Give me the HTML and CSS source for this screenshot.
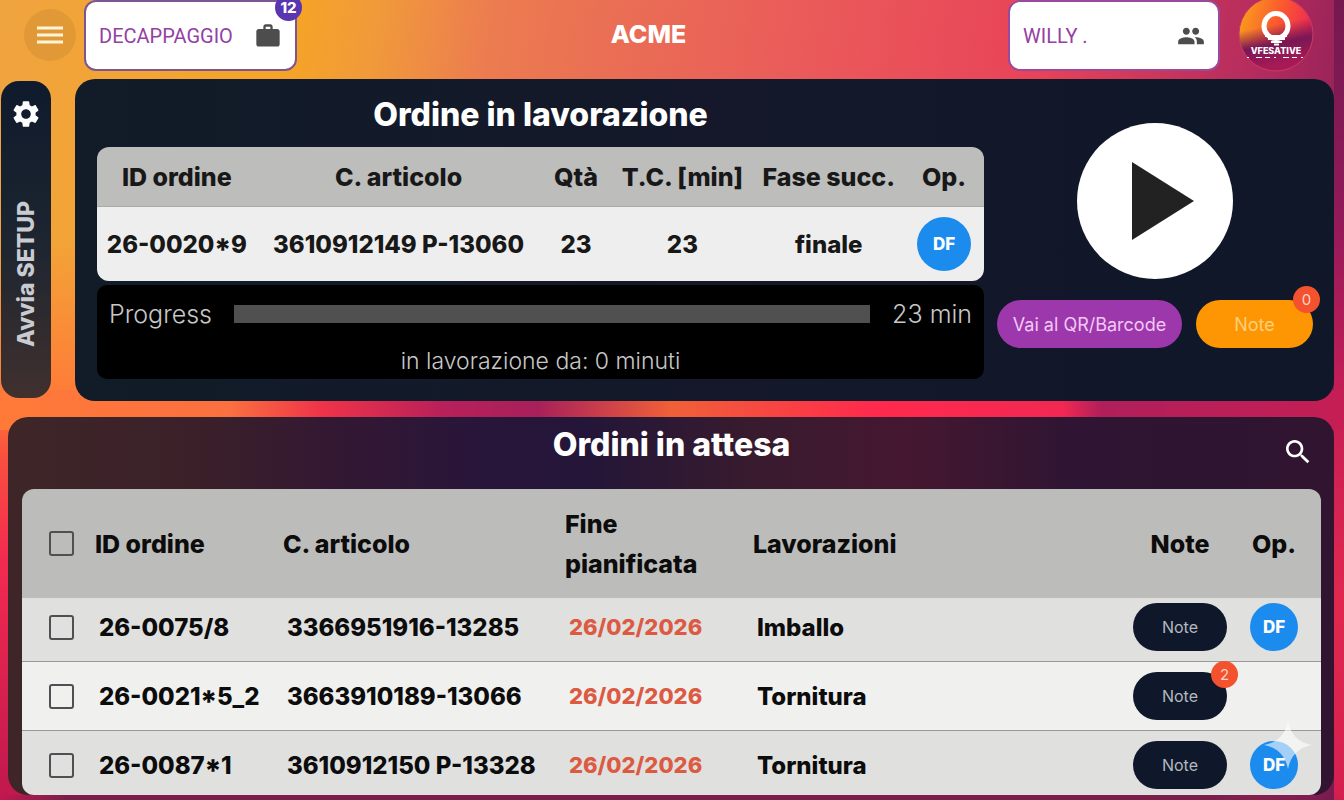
FILE: index.html
```html
<!DOCTYPE html>
<html lang="it">
<head>
  <meta charset="UTF-8">
  <meta name="viewport" content="width=device-width, initial-scale=1.0">
  <title>Ordini</title>
  <link rel="stylesheet" href="styles.css">
</head>
<body>
  <header class="topbar">
    <button class="menu-btn" aria-label="Menu">
      <svg viewBox="0 0 26 20" width="26" height="20"><path d="M0 3h26M0 10h26M0 17h26" stroke="#fff5d8" stroke-width="3"/></svg>
    </button>
    <div class="field">
      <input type="text" aria-label="Reparto" value="DECAPPAGGIO" readonly>
      <svg viewBox="0 0 24 24" width="28" height="28" fill="#4d4d4d"><path d="M10 2h4c1.100 0 2 .9 2 2v2h4c1.100 0 2 .9 2 2v11c0 1.100-.9 2-2 2H4c-1.100 0-2-.9-2-2V8c0-1.100.9-2 2-2h4V4c0-1.100.9-2 2-2zm4 4V4h-4v2z"/></svg>
      <span class="count count-violet">12</span>
    </div>
    <h1>ACME</h1>
    <div class="field field-user">
      <input type="text" aria-label="Operatore" value="WILLY ." readonly>
      <svg viewBox="0 0 24 24" width="28" height="28" fill="#4d4d4d"><path d="M16 11c1.660 0 2.990-1.340 2.990-3S17.660 5 16 5s-3 1.340-3 3 1.340 3 3 3zm-8 0c1.660 0 2.990-1.340 2.990-3S9.660 5 8 5 5 6.340 5 8s1.340 3 3 3zm0 2c-2.330 0-7 1.170-7 3.500V19h14v-2.500C15 14.170 10.330 13 8 13zm8 0c-.29 0-.62.02-.97.05 1.160.84 1.970 1.970 1.970 3.450V19h6v-2.500c0-2.330-4.670-3.500-7-3.500z"/></svg>
    </div>
    <svg class="logo" viewBox="0 0 76 76" width="76" height="76">
      <defs>
        <linearGradient id="logo-sky" x1="0" y1="0.200" x2="1" y2="0.500">
          <stop offset="0" stop-color="#f9a01b"/>
          <stop offset="0.500" stop-color="#fb5a2e"/>
          <stop offset="1" stop-color="#ee2358"/>
        </linearGradient>
        <linearGradient id="logo-ground" x1="0" y1="0" x2="0.200" y2="1">
          <stop offset="0.450" stop-color="#7a1755" stop-opacity="0"/>
          <stop offset="0.700" stop-color="#7a1755"/>
          <stop offset="1" stop-color="#a81a56"/>
        </linearGradient>
      </defs>
      <circle cx="38" cy="38" r="37" fill="url(#logo-sky)"/>
      <circle cx="38" cy="38" r="37" fill="url(#logo-ground)" stroke="#c43c62"/>
      <ellipse cx="38" cy="30" rx="12" ry="12.500" fill="none" stroke="#fff" stroke-width="5"/>
      <path d="M27 40h22M30 43h17M33 46h11M36 48.500h5" stroke="#fff" stroke-width="2"/>
      <text x="38" y="58" text-anchor="middle">VFESATIVE</text>
      <path d="M9 61.500h58" stroke="#fff" stroke-width="1" stroke-dasharray="2 7 6 3 5 4"/>
    </svg>
  </header>

  <main>
    <div class="current-row">
      <button class="setup-btn">
        <svg viewBox="0 0 24 24" width="32" height="32" fill="#fff"><path d="M19.140 12.940c.04-.3.060-.61.060-.94 0-.32-.02-.64-.07-.94l2.030-1.580c.18-.14.230-.41.120-.61l-1.920-3.320c-.12-.22-.37-.29-.59-.22l-2.390.96c-.5-.38-1.030-.7-1.620-.94l-.36-2.540c-.04-.24-.24-.41-.48-.41h-3.840c-.24 0-.43.170-.47.410l-.36 2.540c-.59.240-1.130.570-1.620.940l-2.390-.96c-.22-.08-.47 0-.59.220L2.740 8.870c-.12.210-.08.470.120.610l2.030 1.580c-.05.300-.09.630-.09.940s.02.640.07.940l-2.030 1.580c-.18.140-.23.410-.12.610l1.920 3.320c.12.220.37.290.59.220l2.390-.96c.5.380 1.030.7 1.620.940l.36 2.540c.05.240.24.410.48.410h3.840c.24 0 .44-.17.470-.41l.36-2.540c.59-.24 1.130-.56 1.620-.94l2.390.96c.22.080.47 0 .59-.22l1.920-3.320c.12-.22.070-.47-.12-.61l-2.010-1.580zM12 15.600c-1.980 0-3.600-1.620-3.600-3.600s1.620-3.600 3.600-3.600 3.600 1.620 3.600 3.600-1.620 3.600-3.600 3.600z"/></svg>
        <span>Avvia SETUP</span>
      </button>

      <section class="panel current">
        <div class="current-info">
          <h2>Ordine in lavorazione</h2>
          <table class="current-table">
            <colgroup>
              <col class="w-id"><col class="w-art"><col class="w-qty"><col class="w-tc"><col class="w-next"><col class="w-op">
            </colgroup>
            <thead>
              <tr><th>ID ordine</th><th>C. articolo</th><th>Qtà</th><th>T.C. [min]</th><th>Fase succ.</th><th>Op.</th></tr>
            </thead>
            <tbody>
              <tr>
                <td>26-0020*9</td><td>3610912149 P-13060</td><td>23</td><td>23</td><td>finale</td>
                <td><span class="avatar avatar-lg">DF</span></td>
              </tr>
            </tbody>
          </table>
          <div class="progress-box">
            <div class="progress-line">
              <label for="progress">Progress</label>
              <progress id="progress" value="0" max="100"></progress>
              <span>23 min</span>
            </div>
            <p>in lavorazione da: 0 minuti</p>
          </div>
        </div>

        <div class="actions">
          <button class="play-btn" aria-label="Avvia">
            <svg viewBox="0 0 62 78" width="62" height="78"><path d="M0 0l62 39L0 78z" fill="#222"/></svg>
          </button>
          <div class="action-line">
            <button class="pill pill-purple">Vai al QR/Barcode</button>
            <button class="pill pill-orange">Note<span class="count">0</span></button>
          </div>
        </div>
      </section>
    </div>

    <section class="panel waiting">
      <div class="waiting-head">
        <h2>Ordini in attesa</h2>
        <button class="search-btn" aria-label="Cerca">
          <svg viewBox="0 0 24 24" width="32" height="32" fill="#fff"><path d="M15.500 14h-.79l-.28-.27C15.410 12.590 16 11.110 16 9.500 16 5.910 13.090 3 9.500 3S3 5.910 3 9.500 5.910 16 9.500 16c1.610 0 3.090-.59 4.230-1.570l.27.280v.79l5 4.990L20.490 19l-4.990-5zm-6 0C7.010 14 5 11.990 5 9.500S7.010 5 9.500 5 14 7.010 14 9.500 11.990 14 9.500 14z"/></svg>
        </button>
      </div>
      <div class="table-scroll">
        <table class="waiting-table">
          <colgroup>
            <col class="c-check"><col class="c-id"><col class="c-art"><col class="c-date"><col><col class="c-btn"><col class="c-btn">
          </colgroup>
          <thead>
            <tr>
              <th class="check"><input type="checkbox" aria-label="Seleziona tutti"></th>
              <th>ID ordine</th><th>C. articolo</th><th>Fine pianificata</th><th>Lavorazioni</th>
              <th class="mid">Note</th><th class="mid">Op.</th>
            </tr>
          </thead>
          <tbody>
            <tr>
              <td class="check"><input type="checkbox" aria-label="Seleziona 26-0075/8"></td>
              <td>26-0075/8</td><td>3366951916-13285</td><td class="late">26/02/2026</td><td>Imballo</td>
              <td class="mid"><button class="pill pill-dark">Note</button></td>
              <td class="mid"><span class="avatar">DF</span></td>
            </tr>
            <tr>
              <td class="check"><input type="checkbox" aria-label="Seleziona 26-0021*5_2"></td>
              <td>26-0021*5_2</td><td>3663910189-13066</td><td class="late">26/02/2026</td><td>Tornitura</td>
              <td class="mid"><button class="pill pill-dark">Note<span class="count">2</span></button></td>
              <td></td>
            </tr>
            <tr>
              <td class="check"><input type="checkbox" aria-label="Seleziona 26-0087*1"></td>
              <td>26-0087*1</td><td>3610912150 P-13328</td><td class="late">26/02/2026</td><td>Tornitura</td>
              <td class="mid"><button class="pill pill-dark">Note</button></td>
              <td class="mid"><span class="avatar">DF</span></td>
            </tr>
          </tbody>
        </table>
      </div>
    </section>
  </main>

  <svg class="sparkle" viewBox="0 0 48 48" width="48" height="48"><path d="M24 0c3 14 10 21 24 24-14 3-21 10-24 24-3-14-10-21-24-24C14 21 21 14 24 0z" fill="#fff"/></svg>
</body>
</html>
```
FILE: styles.css
```css
* {
  box-sizing: border-box;
}

body {
  margin: 0;
  height: 100vh;
  display: flex;
  flex-direction: column;
  overflow: hidden;
  font-family: Inter, "Open Sans", sans-serif;
  color: #fff;
  background:
    linear-gradient(to right, rgba(122, 31, 74, 0) 0, #7a1f4a 5%, #7a1f4a 90%, rgba(122, 31, 74, 0) 100%) bottom / 100% 5px no-repeat,
    linear-gradient(to right, #ff7a38 0, #fb7040 17%, #ee3348 24%, #b8205a 33%, #a8205a 40%, #f06038 50%, #ff2a4c 65%, #f22852 79%, #b01f5a 82%, #c51e55 100%) 0 390px / 100% 40px no-repeat,
    linear-gradient(to bottom, #74194f 0, #8e1a5a 25%, #c51e55 50%, #e0284f 75%, #d3204f 100%) right / 10px 100% no-repeat,
    linear-gradient(to bottom, rgba(255, 122, 56, 0) 30%, #ff7a38 50%, #f8503f 57%, #f32a50 70%, #c0184f 100%) left / 80px 100% no-repeat,
    linear-gradient(98deg, #f0a440 0, #f6a426 20%, #f09a3a 26%, #ec7c50 34%, #ea6f54 42%, #ea5a5a 56%, #e84358 72%, #b02a5e 88%, #74194f 100%);
}

h1,
h2,
p {
  margin: 0;
}

button {
  font-family: inherit;
  color: inherit;
  border: none;
  padding: 0;
  cursor: pointer;
}

svg {
  display: block;
  flex: none;
}

/* top bar */
.topbar {
  display: flex;
  align-items: flex-start;
  padding: 0 30px 0 24px;
  height: 79px;
}

.topbar h1 {
  flex: 1;
  padding-right: 8px;
  text-align: center;
  font-size: 25px;
  font-weight: 800;
  line-height: 68px;
}

.menu-btn {
  width: 52px;
  height: 52px;
  margin: 9px 8px 0 0;
  display: grid;
  place-items: center;
  border-radius: 50%;
  background: rgba(90, 60, 20, 0.1);
}

.field {
  position: relative;
  display: flex;
  align-items: center;
  width: 213px;
  height: 71px;
  padding: 0 13px;
  background: #fff;
  border: 2px solid #7d5590;
  border-radius: 12px;
}

.field input {
  flex: 1;
  min-width: 0;
  padding: 0;
  border: none;
  outline: none;
  background: none;
  font: 20px Roboto, sans-serif;
  color: #9440a4;
}

.field-user {
  width: 212px;
  border-color: #9a4a9c;
  margin-right: 18px;
}

.logo {
  margin-top: -4px;
}

.logo text {
  font-size: 9px;
  font-weight: 800;
  fill: #fff;
}

.count {
  position: absolute;
  top: -14px;
  right: -7px;
  width: 27px;
  height: 27px;
  display: flex;
  align-items: center;
  justify-content: center;
  border-radius: 50%;
  background: #f4512f;
  font-size: 15px;
  line-height: 1;
  color: #fdd5c5;
}

.count-violet {
  top: -8px;
  background: #5a35b0;
  line-height: 14px;
  font-weight: 800;
  color: #fff;
}

/* layout */
main {
  flex: 1;
  min-height: 0;
  display: flex;
  flex-direction: column;
  gap: 16px;
  padding: 0 10px 5px 0;
}

.panel {
  border-radius: 20px;
}

.panel h2 {
  font-size: 32px;
  font-weight: 800;
  line-height: 36px;
  text-align: center;
}

.current-row {
  display: flex;
  gap: 24px;
  padding-left: 1px;
}

.setup-btn {
  width: 50px;
  margin: 2px 0 3px;
  padding-top: 17px;
  display: flex;
  flex-direction: column;
  align-items: center;
  gap: 20px;
  border-radius: 18px;
  background: linear-gradient(#0f1a2c, #1c2530 50%, #40302e);
  font-size: 23px;
  font-weight: 800;
  color: #c9cbd0;
}

.setup-btn span {
  flex: 1;
  writing-mode: vertical-rl;
  transform: rotate(180deg);
  text-align: center;
}

/* order in progress */
.current {
  flex: 1;
  display: flex;
  gap: 13px;
  padding: 18px 21px 22px 22px;
  background: linear-gradient(to right, #111c28, #14182a 50%, #0f1728);
}

.current-info {
  flex: 1;
}

.current-info h2 {
  margin-bottom: 14px;
}

table {
  width: 100%;
  table-layout: fixed;
  border-collapse: separate;
  border-spacing: 0;
  font-size: 24px;
  font-weight: 800;
}

th,
td {
  padding: 0;
}

th {
  font-size: 25px;
  font-weight: 800;
}

.current-table {
  margin-bottom: 4px;
  border-radius: 12px;
  overflow: hidden;
  text-align: center;
  color: #181818;
}

.current-table th {
  height: 60px;
  background: #bdbdbc;
  border-bottom: 1px solid #aaa;
}

.current-table td {
  height: 74px;
  background: #eee;
}

.w-id { width: 18%; }
.w-art { width: 32%; }
.w-qty { width: 8%; }
.w-tc { width: 16%; }
.w-next { width: 17%; }
.w-op { width: 9%; }

.avatar {
  display: block;
  width: 48px;
  margin: 0 auto;
  border-radius: 50%;
  background: #1c8bee;
  font-size: 17px;
  line-height: 48px;
  text-align: center;
  color: #fff;
}

.avatar-lg {
  width: 54px;
  line-height: 54px;
}

.progress-box {
  height: 94px;
  padding: 11px 12px 0;
  border-radius: 10px;
  background: #000;
  color: #c8c8c8;
  font-size: 25px;
  font-weight: 300;
}

.progress-line {
  display: flex;
  align-items: center;
  gap: 22px;
  line-height: 36px;
}

progress {
  flex: 1;
  min-width: 0;
  height: 18px;
  appearance: none;
  border: none;
  background: #505050;
}

progress::-webkit-progress-bar {
  background: #505050;
}

.progress-box p {
  margin-top: 11px;
  font-size: 23px;
  line-height: 36px;
  text-align: center;
}

.actions {
  width: 316px;
  padding-top: 26px;
  display: flex;
  flex-direction: column;
  align-items: center;
  gap: 21px;
}

.play-btn {
  width: 156px;
  height: 156px;
  padding-left: 16px;
  display: grid;
  place-items: center;
  border-radius: 50%;
  background: #fff;
}

.action-line {
  display: flex;
  gap: 14px;
  width: 100%;
}

.pill {
  position: relative;
  height: 48px;
  border-radius: 24px;
  font-size: 18px;
}

.pill-purple {
  flex: 1;
  background: #9c38ac;
  color: #f3c8f5;
}

.pill-orange {
  width: 117px;
  background: #fd9602;
  color: #ffd07c;
}

.pill-dark {
  width: 94px;
  background: #0f182a;
  font-size: 16px;
  color: #b4b8c0;
}

.pill-dark .count {
  top: -11px;
  right: -11px;
}

/* waiting orders */
.waiting {
  flex: 1;
  min-height: 0;
  display: flex;
  flex-direction: column;
  margin-left: 8px;
  padding: 0 13px 0 14px;
  background: linear-gradient(to right, #3e2628, #3b2029 14%, #341832 24%, #28153a 36%, #241638 44%, #381b2e 56%, #451730 68%, #2f1533 80%, #301430);
}

.waiting-head {
  display: grid;
  grid-template-columns: 1fr auto 1fr;
  height: 72px;
  padding-top: 10px;
}

.waiting-head h2 {
  grid-column: 2;
}

.search-btn {
  justify-self: end;
  align-self: start;
  margin: 9px 7px 0 0;
  background: none;
}

.table-scroll {
  flex: 1;
  min-height: 0;
  overflow-y: auto;
  scrollbar-width: none;
  border-radius: 12px;
}

.waiting-table {
  color: #0c0c0c;
  text-align: left;
}

.waiting-table th {
  position: sticky;
  top: 0;
  z-index: 1;
  height: 109px;
  padding: 0 8px;
  line-height: 40px;
  background: #bcbcbb;
}

.waiting-table td {
  padding: 10px 12px;
  height: 69px;
  background: #e0e0df;
  border-bottom: 1px solid #999;
}

.waiting-table tr:nth-child(even) td {
  background: #f0f0ef;
}

.waiting-table tbody tr:first-child td {
  height: 64px;
  padding-top: 5px;
}

.waiting-table .mid {
  padding-left: 0;
  padding-right: 0;
  text-align: center;
}

.waiting-table .check {
  padding-left: 27px;
  padding-right: 0;
}

.waiting-table .late {
  font-size: 22px;
  color: #dc5a42;
}

.c-check { width: 5%; }
.c-id { width: 188px; }
.c-art { width: 282px; }
.c-date { width: 188px; }
.c-btn { width: 94px; }

input[type="checkbox"] {
  appearance: none;
  display: block;
  width: 25px;
  height: 25px;
  margin: 0;
  border: 2px solid #505054;
  border-radius: 3px;
}

input[type="checkbox"]:checked {
  background: #1c8bee;
}

.sparkle {
  position: fixed;
  right: 32px;
  bottom: 31px;
  z-index: 2;
  opacity: 0.6;
}
```
